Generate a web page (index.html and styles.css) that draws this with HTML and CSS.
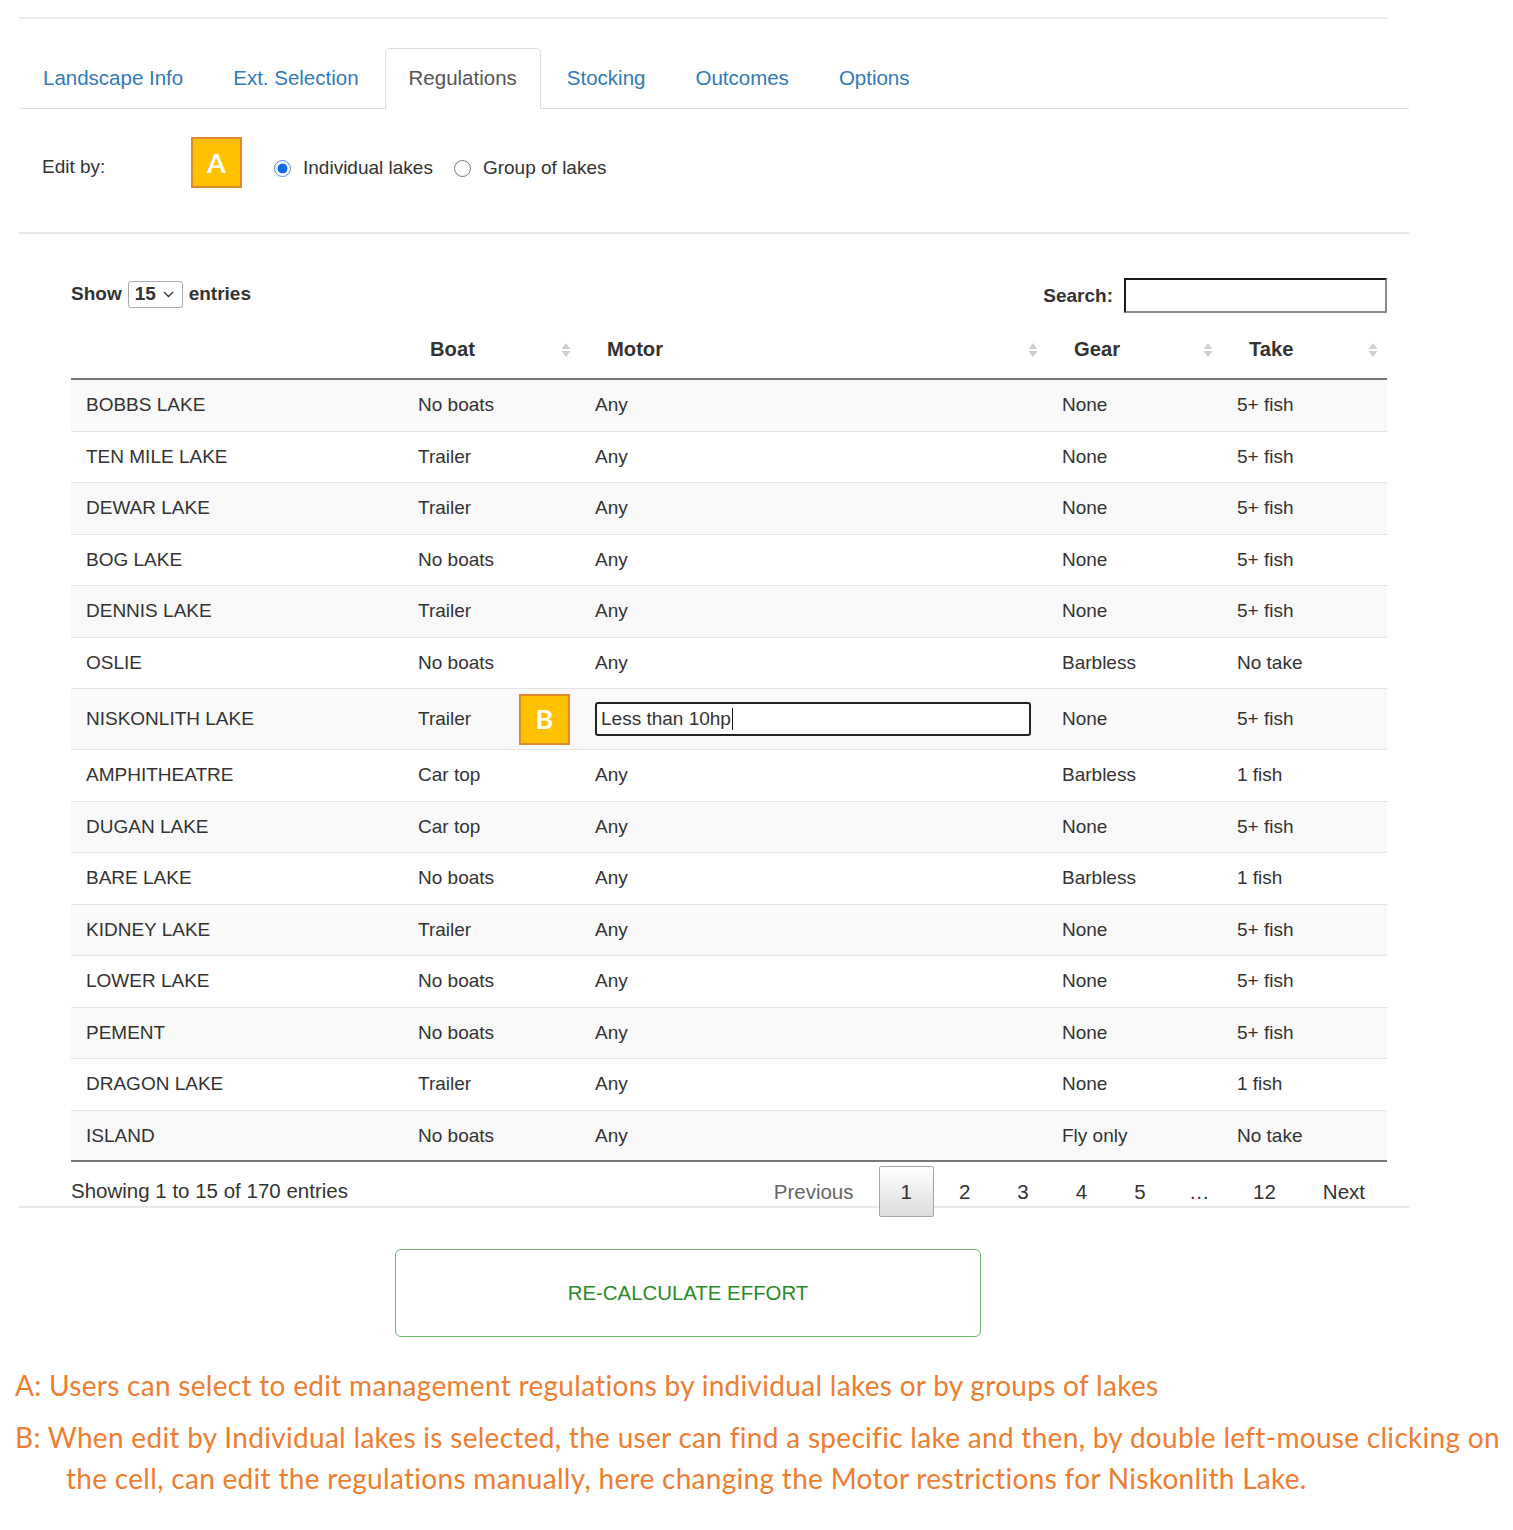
FILE: index.html
```html
<!DOCTYPE html>
<html lang="en">
<head>
<meta charset="utf-8">
<title>Regulations</title>
<link rel="stylesheet" href="styles.css">
</head>
<body>
<div class="page">
  <div class="top-rule"></div>
  <ul class="tabs">
    <li class="tab"><a>Landscape Info</a></li>
    <li class="tab"><a>Ext. Selection</a></li>
    <li class="tab active"><a>Regulations</a></li>
    <li class="tab"><a>Stocking</a></li>
    <li class="tab"><a>Outcomes</a></li>
    <li class="tab"><a>Options</a></li>
  </ul>
  <div class="pane">
    <div class="edit-row">
      <span class="edit-label">Edit by:</span>
      <span class="badge badge-a">A</span>
      <label class="radio"><span class="radio-dot checked"></span>Individual lakes</label>
      <label class="radio radio-second"><span class="radio-dot"></span>Group of lakes</label>
    </div>
    <div class="table-area">
      <div class="controls">
        <div class="length">
          <span>Show</span>
          <span class="select">15
            <svg class="chev" width="11" height="7" viewBox="0 0 11 7"><path d="M1 1l4.5 4.5L10 1" fill="none" stroke="#333" stroke-width="1.3"/></svg>
          </span>
          <span>entries</span>
        </div>
        <div class="search">
          <span>Search:</span>
          <span class="search-box"></span>
        </div>
      </div>
      <table class="grid">
        <colgroup>
          <col class="c1"><col class="c2"><col class="c3"><col class="c4"><col class="c5">
        </colgroup>
        <thead>
          <tr>
            <th class="blank"></th>
            <th><div class="th-in"><span>Boat</span><svg class="sort" width="10" height="16" viewBox="0 0 10 16"><path d="M5 1l4.5 6h-9z M5 15l4.5-6h-9z" fill="#cfcfcf"/></svg></div></th>
            <th><div class="th-in"><span>Motor</span><svg class="sort" width="10" height="16" viewBox="0 0 10 16"><path d="M5 1l4.5 6h-9z M5 15l4.5-6h-9z" fill="#cfcfcf"/></svg></div></th>
            <th><div class="th-in"><span>Gear</span><svg class="sort" width="10" height="16" viewBox="0 0 10 16"><path d="M5 1l4.5 6h-9z M5 15l4.5-6h-9z" fill="#cfcfcf"/></svg></div></th>
            <th><div class="th-in"><span>Take</span><svg class="sort" width="10" height="16" viewBox="0 0 10 16"><path d="M5 1l4.5 6h-9z M5 15l4.5-6h-9z" fill="#cfcfcf"/></svg></div></th>
          </tr>
        </thead>
        <tbody>
          <tr class="odd"><td>BOBBS LAKE</td><td>No boats</td><td>Any</td><td>None</td><td>5+ fish</td></tr>
          <tr><td>TEN MILE LAKE</td><td>Trailer</td><td>Any</td><td>None</td><td>5+ fish</td></tr>
          <tr class="odd"><td>DEWAR LAKE</td><td>Trailer</td><td>Any</td><td>None</td><td>5+ fish</td></tr>
          <tr><td>BOG LAKE</td><td>No boats</td><td>Any</td><td>None</td><td>5+ fish</td></tr>
          <tr class="odd"><td>DENNIS LAKE</td><td>Trailer</td><td>Any</td><td>None</td><td>5+ fish</td></tr>
          <tr><td>OSLIE</td><td>No boats</td><td>Any</td><td>Barbless</td><td>No take</td></tr>
          <tr class="odd editing"><td>NISKONLITH LAKE</td><td class="has-badge">Trailer<span class="badge badge-b">B</span></td><td><div class="cell-edit">Less than 10hp<span class="caret"></span></div></td><td>None</td><td>5+ fish</td></tr>
          <tr><td>AMPHITHEATRE</td><td>Car top</td><td>Any</td><td>Barbless</td><td>1 fish</td></tr>
          <tr class="odd"><td>DUGAN LAKE</td><td>Car top</td><td>Any</td><td>None</td><td>5+ fish</td></tr>
          <tr><td>BARE LAKE</td><td>No boats</td><td>Any</td><td>Barbless</td><td>1 fish</td></tr>
          <tr class="odd"><td>KIDNEY LAKE</td><td>Trailer</td><td>Any</td><td>None</td><td>5+ fish</td></tr>
          <tr><td>LOWER LAKE</td><td>No boats</td><td>Any</td><td>None</td><td>5+ fish</td></tr>
          <tr class="odd"><td>PEMENT</td><td>No boats</td><td>Any</td><td>None</td><td>5+ fish</td></tr>
          <tr><td>DRAGON LAKE</td><td>Trailer</td><td>Any</td><td>None</td><td>1 fish</td></tr>
          <tr class="odd"><td>ISLAND</td><td>No boats</td><td>Any</td><td>Fly only</td><td>No take</td></tr>
        </tbody>
      </table>
      <div class="footer">
        <div class="info">Showing 1 to 15 of 170 entries</div>
        <div class="paginate">
          <a class="pg disabled">Previous</a>
          <a class="pg current">1</a>
          <a class="pg">2</a>
          <a class="pg">3</a>
          <a class="pg">4</a>
          <a class="pg">5</a>
          <span class="ellipsis">…</span>
          <a class="pg">12</a>
          <a class="pg">Next</a>
        </div>
      </div>
    </div>
  </div>
  <button class="recalc">RE-CALCULATE EFFORT</button>
</div>
<div class="notes">
  <p class="note">A: Users can select to edit management regulations by individual lakes or by groups of lakes</p>
  <p class="note hang">B: When edit by Individual lakes is selected, the user can find a specific lake and then, by double left-mouse clicking on<br>the cell, can edit the regulations manually, here changing the Motor restrictions for Niskonlith Lake.</p>
</div>
</body>
</html>
```

FILE: styles.css
```css
body {
  margin: 0;
  background: #fff;
  color: #333;
  font-family: "Liberation Sans", Arial, sans-serif;
}

.page {
  width: 1390px;
  margin-left: 19px;
}

.top-rule {
  width: 1369px;
  border-top: 2px solid #ebebeb;
  margin-top: 17px;
}

/* Tabs */
.tabs {
  list-style: none;
  margin: 29px 0 0;
  padding: 0;
  display: flex;
  border-bottom: 1px solid #dddddd;
}

.tab {
  margin-bottom: -1px;
}

.tab a {
  display: block;
  padding: 14px 23px 16px;
  margin-right: 2px;
  line-height: 29px;
  font-size: 20.5px;
  color: #337ab7;
  border: 1px solid transparent;
  border-radius: 5px 5px 0 0;
}

.tab.active a {
  color: #555;
  background: #fff;
  border-color: #dddddd #dddddd transparent;
}

/* Edit by row */
.edit-row {
  display: flex;
  align-items: flex-start;
  height: 125px;
  box-sizing: border-box;
  padding: 28px 0 0 23px;
  border-bottom: 2px solid #e8e8e8;
  font-size: 19px;
  line-height: 27px;
}

.edit-label {
  width: 149px;
  margin-top: 16px;
}

.badge {
  display: flex;
  align-items: center;
  justify-content: center;
  width: 51px;
  height: 51px;
  box-sizing: border-box;
  background: #ffc000;
  border: 2px solid #e2892f;
  color: #fff;
  font-family: Lato, "Open Sans", sans-serif;
  font-weight: 700;
  font-size: 27px;
}

.badge-a {
  margin-right: 32px;
}

.radio {
  display: flex;
  align-items: center;
  margin-top: 17px;
}

.radio-second {
  margin-left: 21px;
}

.radio-dot {
  width: 17px;
  height: 17px;
  box-sizing: border-box;
  border-radius: 50%;
  border: 1px solid #767676;
  background: #fff;
  margin-right: 12px;
  margin-top: 2px;
}

.radio-dot.checked {
  border: 1.5px solid #4a8fe8;
  background: radial-gradient(circle, #0b6cf0 0 4.6px, #fff 5.3px);
}

/* Table area */
.pane {
  border-bottom: 2px solid #e8e8e8;
}

.table-area {
  padding: 0 22px 0 52px;
}

.controls {
  display: flex;
  justify-content: space-between;
  align-items: center;
  margin-top: 44px;
  height: 35px;
  font-size: 19px;
  font-weight: 700;
}

.length {
  display: flex;
  align-items: center;
  gap: 6px;
  margin-top: -3px;
}

.select {
  display: flex;
  align-items: center;
  width: 55px;
  height: 27px;
  box-sizing: border-box;
  padding-left: 6px;
  border: 1px solid #aaaaaa;
  border-radius: 3px;
  font-weight: 700;
}

.chev {
  margin-left: 7px;
}

.search {
  display: flex;
  align-items: center;
  gap: 11px;
}

.search-box {
  display: block;
  width: 263px;
  height: 35px;
  box-sizing: border-box;
  border: 2px solid #1a1a1a;
  border-right-color: #8a8a8a;
  border-bottom-color: #8a8a8a;
}

.grid {
  width: 1316px;
  table-layout: fixed;
  border-collapse: separate;
  border-spacing: 0;
  margin-top: 12px;
  font-size: 19px;
}

.c1 { width: 332px; }
.c2 { width: 177px; }
.c3 { width: 467px; }
.c4 { width: 175px; }
.c5 { width: 165px; }

.grid th {
  padding: 10px 9px 14px 27px;
  text-align: left;
  font-size: 20.2px;
  font-weight: 700;
  line-height: 29px;
  border-bottom: 2px solid #777;
}

.th-in {
  display: flex;
  align-items: center;
  justify-content: space-between;
}

.sort {
  display: block;
}

.grid td {
  padding: 14px 15px;
  line-height: 22.5px;
  vertical-align: middle;
  border-top: 1px solid #e3e3e3;
  white-space: nowrap;
}

.grid tbody tr:first-child td {
  border-top: 0;
}

.grid tbody tr:last-child td {
  padding-bottom: 13px;
  border-bottom: 2px solid #777;
}

.grid tr.odd td {
  background: #f9f9f9;
}

.grid tr.editing td {
  padding-top: 13px;
  padding-bottom: 13px;
}

.has-badge {
  position: relative;
}

.badge-b {
  position: absolute;
  left: 116px;
  top: 5px;
}

.cell-edit {
  display: flex;
  align-items: center;
  height: 34px;
  width: 436px;
  box-sizing: border-box;
  padding-left: 4px;
  border: 2px solid #222;
  border-radius: 3px;
  background: #fff;
}

.caret {
  display: inline-block;
  width: 1px;
  height: 22px;
  background: #111;
  margin-left: 1px;
}

/* Footer */
.footer {
  display: flex;
  justify-content: space-between;
  align-items: flex-start;
  height: 44px;
  font-size: 20.5px;
  line-height: 29px;
}

.info {
  margin-top: 14px;
}

.paginate {
  display: flex;
  margin-top: 4px;
}

.pg {
  display: block;
  padding: 10px 21px;
  margin-left: 3px;
  border: 1px solid transparent;
  border-radius: 2px;
  color: #333;
}

.pg.disabled {
  color: #666;
}

.pg.current {
  border-color: #a5a5a5;
  background: linear-gradient(to bottom, #ffffff 0%, #dcdcdc 100%);
}

.ellipsis {
  display: block;
  padding: 11px 18.5px;
  margin-left: 3px;
  color: #333;
}

/* Button */
.recalc {
  display: block;
  margin: 41px 0 0 376px;
  width: 586px;
  height: 88px;
  background: #fff;
  border: 1.5px solid #6ab86a;
  border-radius: 6px;
  color: #2a8a2a;
  font-family: "Liberation Sans", Arial, sans-serif;
  font-size: 20.4px;
}

/* Notes */
.notes {
  margin-top: 28px;
  padding-left: 15px;
  color: #ed7d31;
  font-family: Lato, "Open Sans", sans-serif;
  font-size: 28px;
  letter-spacing: 0.3px;
  line-height: 41px;
}

.note {
  margin: 0 0 11px;
  white-space: nowrap;
}

.note.hang {
  padding-left: 51px;
  text-indent: -51px;
}
```
